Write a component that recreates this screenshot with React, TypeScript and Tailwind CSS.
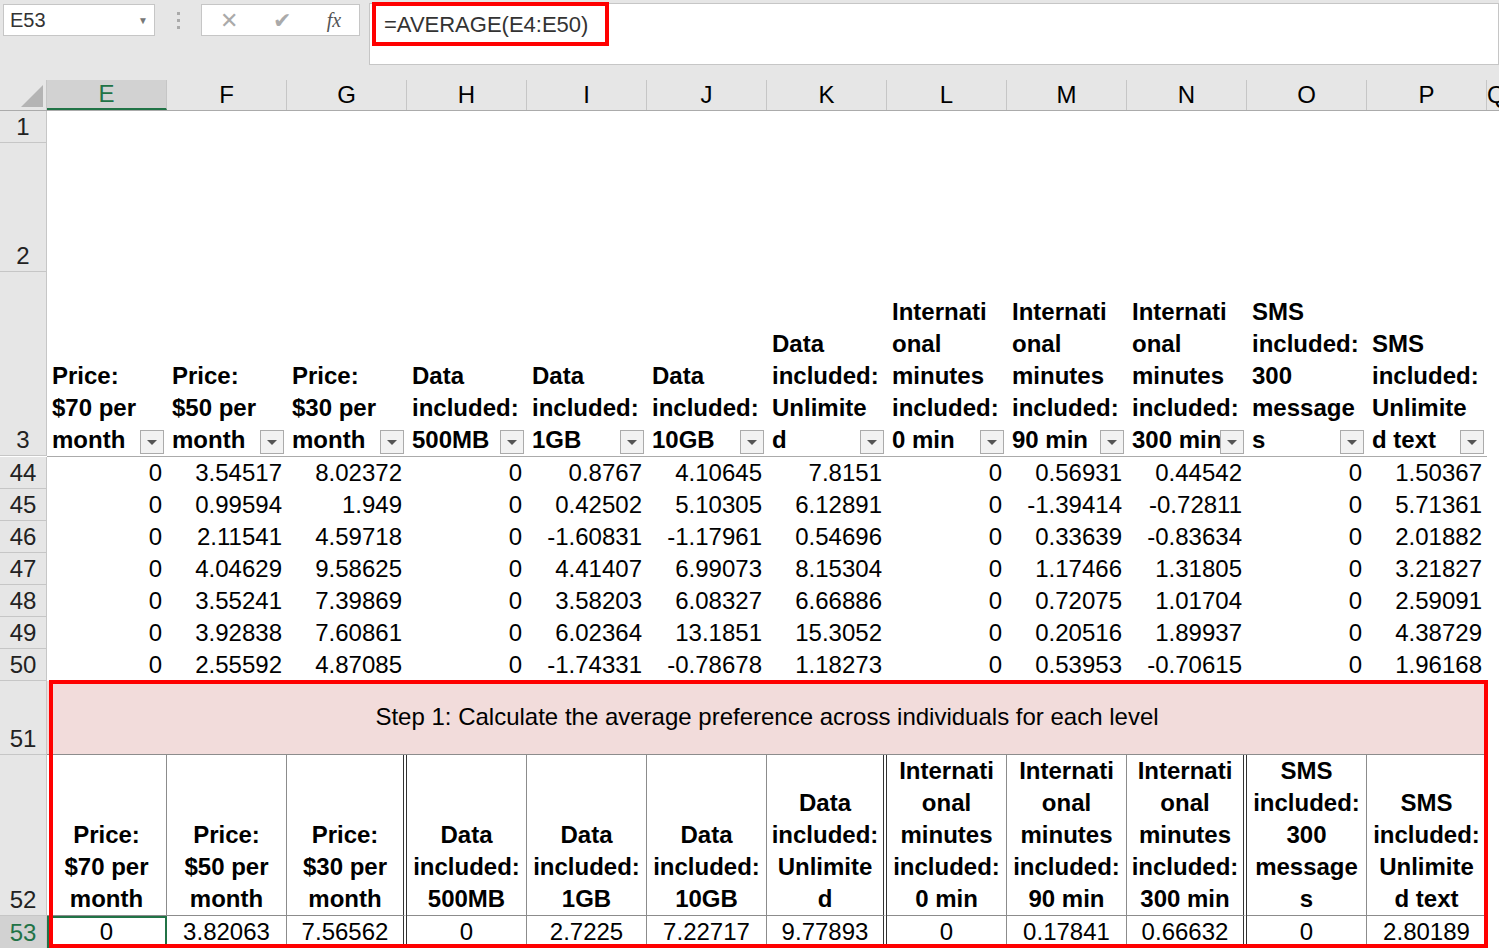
import React from "react";

const cols = ["E","F","G","H","I","J","K","L","M","N","O","P"];
const hdr: string[][] = [
  ["Price:","$70 per","month"],["Price:","$50 per","month"],["Price:","$30 per","month"],
  ["Data","included:","500MB"],["Data","included:","1GB"],["Data","included:","10GB"],
  ["Data","included:","Unlimite","d"],["Internati","onal","minutes","included:","0 min"],
  ["Internati","onal","minutes","included:","90 min"],["Internati","onal","minutes","included:","300 min"],
  ["SMS","included:","300","message","s"],["SMS","included:","Unlimite","d text"],
];
const data: [number,string[]][] = [
  [44,["0","3.54517","8.02372","0","0.8767","4.10645","7.8151","0","0.56931","0.44542","0","1.50367"]],
  [45,["0","0.99594","1.949","0","0.42502","5.10305","6.12891","0","-1.39414","-0.72811","0","5.71361"]],
  [46,["0","2.11541","4.59718","0","-1.60831","-1.17961","0.54696","0","0.33639","-0.83634","0","2.01882"]],
  [47,["0","4.04629","9.58625","0","4.41407","6.99073","8.15304","0","1.17466","1.31805","0","3.21827"]],
  [48,["0","3.55241","7.39869","0","3.58203","6.08327","6.66886","0","0.72075","1.01704","0","2.59091"]],
  [49,["0","3.92838","7.60861","0","6.02364","13.1851","15.3052","0","0.20516","1.89937","0","4.38729"]],
  [50,["0","2.55592","4.87085","0","-1.74331","-0.78678","1.18273","0","0.53953","-0.70615","0","1.96168"]],
];
const avg = ["0","3.82063","7.56562","0","2.7225","7.22717","9.77893","0","0.17841","0.66632","0","2.80189"];
const dbl = [2, 6, 9];
const F = { fontFamily: '"Liberation Sans", Arial, sans-serif' };
const N = { fontFamily: '"Liberation Sans Narrow", "Arial Narrow", "Liberation Sans", sans-serif' };

function RowNum({ n, h, sel }: { n: number | string; h: number; sel?: boolean }) {
  return (
    <div className={`w-[47px] shrink-0 border-r border-b border-[#c6c6c6] flex items-end justify-center pb-0 text-[24px] leading-[30px] ${sel ? "bg-[#d2d2d2] text-[#217346]" : "bg-[#e6e6e6] text-[#222]"}`} style={{ height: h }}>
      {n}
    </div>
  );
}

export default function App() {
  return (
    <div className="w-[1499px] h-[948px] overflow-hidden bg-white relative text-black" style={F}>
      <div className="h-[80px] bg-[#e6e6e6] relative flex">
        <div className="mt-[4px] ml-[3px] w-[152px] h-[32px] bg-white border border-[#c6c6c6] flex items-center justify-between px-[6px] text-[20px] text-[#333]">
          <span>E53</span><span className="text-[10px] text-[#777]">▼</span>
        </div>
        <div className="w-[46px] flex flex-col items-center pt-[12px] gap-[4px]">
          <div className="w-[3px] h-[3px] bg-[#aaa]" />
          <div className="w-[3px] h-[3px] bg-[#aaa]" />
          <div className="w-[3px] h-[3px] bg-[#aaa]" />
        </div>
        <div className="mt-[4px] w-[159px] h-[32px] bg-white border border-[#c6c6c6] flex items-center justify-around text-[22px] text-[#aaa]">
          <span>✕</span><span>✔</span><span className="italic text-[#555] text-[20px]" style={{ fontFamily: '"Liberation Serif", serif' }}>fx</span>
        </div>
        <div className="ml-[9px] mt-[3px] flex-1 h-[62px] bg-white border border-[#c6c6c6] px-[14px] pt-[4px] text-[22px] text-[#333]">
          =AVERAGE(E4:E50)
        </div>
      </div>
      <div className="flex h-[31px] bg-[#e6e6e6] border-b border-[#ababab]">
        <div className="w-[47px] shrink-0 border-r border-[#c6c6c6] relative">
          <div className="absolute right-[3px] bottom-[3px] w-0 h-0 border-l-[22px] border-l-transparent border-b-[22px] border-b-[#b4b4b4]" />
        </div>
        {cols.map((c, i) => (
          <div key={c} className={`w-[120px] shrink-0 border-r border-[#c6c6c6] flex items-center justify-center text-[24px] ${i === 0 ? "bg-[#d2d2d2] text-[#217346] border-b-2 border-b-[#217346]" : ""}`}>{c}</div>
        ))}
        <div className="text-[24px] flex items-center">Q</div>
      </div>
      <div className="flex"><RowNum n={1} h={32} /></div>
      <div className="flex"><RowNum n={2} h={129} /></div>
      <div className="flex">
        <RowNum n={3} h={184} />
        <div className="flex border-b border-[#ababab]">
          {hdr.map((h, i) => (
            <div key={i} className="w-[120px] h-[184px] shrink-0 relative flex flex-col justify-end pl-[5px] font-bold text-[24px] leading-[32px] whitespace-nowrap">
              {h.map((l, j) => <div key={j}>{l}</div>)}
              <div className="absolute right-[3px] bottom-[2px] w-[24px] h-[24px] bg-[#f2f2f2] border border-[#ababab] flex items-center justify-center">
                <div className="w-0 h-0 border-l-[5px] border-r-[5px] border-t-[5px] border-l-transparent border-r-transparent border-t-[#555]" />
              </div>
            </div>
          ))}
        </div>
      </div>
      {data.map(([n, vals]) => (
        <div key={n} className="flex">
          <RowNum n={n} h={32} />
          {vals.map((v, i) => (
            <div key={i} className="w-[120px] h-[32px] shrink-0 text-right pr-[5px] text-[24px] leading-[32px]">{v}</div>
          ))}
        </div>
      ))}
      <div className="flex">
        <RowNum n={51} h={74} />
        <div className="w-[1440px] h-[74px] bg-[#f2dcdb] border-b border-[#8c8c8c] flex items-center justify-center text-[24px] pb-[2px]">
          Step 1: Calculate the average preference across individuals for each level
        </div>
      </div>
      <div className="flex">
        <RowNum n={52} h={161} />
        {hdr.map((h, i) => (
          <div key={i} className={`w-[120px] h-[161px] shrink-0 border-b border-[#8c8c8c] flex flex-col justify-end items-center font-bold text-[24px] leading-[32px] whitespace-nowrap ${dbl.includes(i) ? "border-r-[4px] border-double border-r-[#333]" : "border-r border-r-[#8c8c8c]"}`} style={N}>
            {h.map((l, j) => <div key={j}>{l}</div>)}
          </div>
        ))}
      </div>
      <div className="flex">
        <RowNum n={53} h={33} sel />
        {avg.map((v, i) => (
          <div key={i} className={`w-[120px] h-[33px] shrink-0 text-center text-[24px] leading-[32px] ${i === 0 ? "outline-2 outline-[#217346] -outline-offset-2" : ""} ${dbl.includes(i) ? "border-r-[4px] border-double border-r-[#333]" : "border-r border-r-[#8c8c8c]"}`} style={N}>{v}</div>
        ))}
      </div>
      <div className="absolute left-[372px] top-[2px] w-[237px] h-[44px] border-[4px] border-[#ff0000] pointer-events-none" />
      <div className="absolute left-[49px] top-[680px] w-[1439px] h-[268px] border-[4px] border-[#ff0000] pointer-events-none" />
    </div>
  );
}
